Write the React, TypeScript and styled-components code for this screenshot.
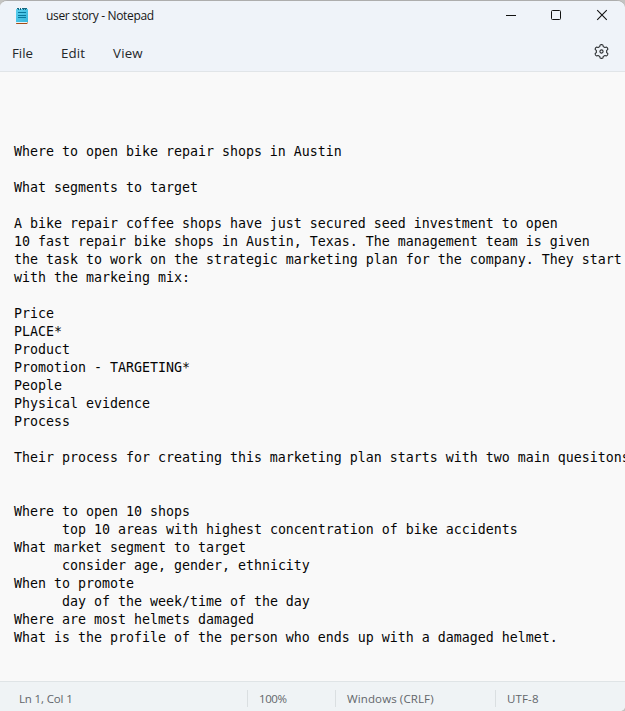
import React from "react";
import styled, { createGlobalStyle } from "styled-components";

const GlobalStyle = createGlobalStyle`
  * { box-sizing: border-box; }
  body { margin: 0; background: #c4c4c2; overflow: hidden; }
`;

const Window = styled.div`
  width: 625px;
  height: 711px;
  display: flex;
  flex-direction: column;
  overflow: hidden;
  border-top: 1px solid #adadad;
  border-radius: 7px 8px 5px 0;
  background: #f9f9f9;
  font-family: "Open Sans", "Noto Sans", sans-serif;
`;

const Header = styled.header`
  flex: none;
  height: 71px;
  background: #eff3f9;
  border-bottom: 1px solid #e1e5e8;
`;

const TitleBar = styled.div`
  display: flex;
  align-items: center;
  height: 30px;
  padding: 0 16px 0 15px;
`;

const Title = styled.h1`
  margin: 0 auto 0 17px;
  font-size: 12px;
  font-weight: 400;
  line-height: 18px;
  letter-spacing: -0.35px;
  color: #161616;
  white-space: nowrap;
`;

const Controls = styled.div`
  display: flex;
  gap: 31px;
  padding-bottom: 2px;
`;

const IconButton = styled.button`
  display: flex;
  padding: 0;
  border: 0;
  background: none;
  color: #111;
`;

const MenuBar = styled.nav`
  display: flex;
  align-items: center;
  height: 44px;
  padding: 0 15px 0 12px;
`;

const MenuItem = styled.span<{ $width: number; $spacing?: number }>`
  width: ${(p) => p.$width}px;
  font-size: 13.3px;
  line-height: 20px;
  letter-spacing: ${(p) => p.$spacing ?? 0}px;
  color: #24272a;
`;

const Settings = styled(IconButton)`
  margin-left: auto;
  padding-bottom: 3px;
  color: #2c2f32;
`;

const Document = styled.pre`
  flex: 1;
  min-height: 0;
  margin: 0;
  padding: 71px 0 0 14px;
  overflow: hidden;
  font-family: "DejaVu Sans Mono", "Liberation Mono", monospace;
  font-size: 13.29px;
  line-height: 18px;
  tab-size: 6;
  color: #050505;
`;

const StatusBar = styled.footer`
  flex: none;
  display: flex;
  align-items: center;
  height: 30px;
  padding-top: 4px;
  border-top: 1px solid #dfe4e6;
  background: #eff3f5;
`;

const StatusCell = styled.div<{ $width?: number; $first?: boolean; $spacing?: number }>`
  flex: ${(p) => (p.$width ? `0 0 ${p.$width}px` : 1)};
  height: 17px;
  padding-left: ${(p) => (p.$first ? 19 : 11)}px;
  border-left: ${(p) => (p.$first ? "0" : "1px solid #dadfe1")};
  font-size: 11.5px;
  line-height: 18px;
  letter-spacing: ${(p) => p.$spacing ?? 0}px;
  color: #62666a;
  white-space: nowrap;
`;

const text = `Where to open bike repair shops in Austin

What segments to target

A bike repair coffee shops have just secured seed investment to open
10 fast repair bike shops in Austin, Texas. The management team is given
the task to work on the strategic marketing plan for the company. They start
with the markeing mix:

Price
PLACE*
Product
Promotion - TARGETING*
People
Physical evidence
Process

Their process for creating this marketing plan starts with two main quesitons


Where to open 10 shops
\ttop 10 areas with highest concentration of bike accidents
What market segment to target
\tconsider age, gender, ethnicity
When to promote
\tday of the week/time of the day
Where are most helmets damaged
What is the profile of the person who ends up with a damaged helmet.`;

function NotepadIcon() {
  return (
    <svg width="14" height="18" viewBox="0 0 14 18">
      <defs>
        <linearGradient id="paper" x1="0" y1="0" x2="1" y2="1">
          <stop offset="0" stopColor="#5bcfee" />
          <stop offset="1" stopColor="#35b5dc" />
        </linearGradient>
      </defs>
      <rect x="1" y="2" width="12" height="13.5" rx="0.6" fill="url(#paper)" />
      <path d="M1 15h11v1H1Z" fill="#e4f2f6" />
      <path d="M12 15h1v1h-1Z" fill="#d8a67e" />
      <path d="M1 16h11.5v.3q0 .7-.7.7H1.7q-.7 0-.7-.7Z" fill="#a34b16" />
      <path d="M3 5.5h8M3 8.5h8M3 10.5h8" stroke="#09789d" />
      <path d="M2 1.5h2M5 1.5h1M7 1.5h1M9 1.5h1M11 1.5h1M3.5 1v2M5.5 1v2M8.5 1v2M10.5 1v2" stroke="#176780" />
    </svg>
  );
}

function GearIcon() {
  const points: string[] = [];
  const count = 96;
  for (let i = 0; i < count; i++) {
    const angle = (i / count) * Math.PI * 2;
    const radius = 6 + 0.85 * Math.tanh(3 * Math.cos(6 * angle));
    points.push(`${(7.5 + radius * Math.sin(angle)).toFixed(2)} ${(7.5 - radius * Math.cos(angle)).toFixed(2)}`);
  }
  return (
    <svg width="16" height="15" viewBox="0 0 16 15" fill="none" stroke="currentColor" strokeWidth="1.1" strokeLinejoin="round">
      <path d={`M${points.join("L")}Z`} />
      <circle cx="7.5" cy="7.5" r="1.6" />
    </svg>
  );
}

export default function App() {
  return (
    <>
      <GlobalStyle />
      <Window>
        <Header>
          <TitleBar>
            <NotepadIcon />
            <Title>user story - Notepad</Title>
            <Controls>
              <IconButton aria-label="Minimize">
                <svg width="14" height="12" viewBox="0 0 14 12"><path d="M1 6.5h10" stroke="currentColor" /></svg>
              </IconButton>
              <IconButton aria-label="Maximize">
                <svg width="14" height="12" viewBox="0 0 14 12"><rect x="1.5" y="1.5" width="9" height="9" rx="1" fill="none" stroke="currentColor" /></svg>
              </IconButton>
              <IconButton aria-label="Close">
                <svg width="14" height="12" viewBox="0 0 14 12"><path d="m2.2 1.2 9.6 9.6m0-9.6-9.6 9.6" stroke="currentColor" strokeWidth="1.1" /></svg>
              </IconButton>
            </Controls>
          </TitleBar>
          <MenuBar>
            <MenuItem $width={49}>File</MenuItem>
            <MenuItem $width={52} $spacing={0.1}>Edit</MenuItem>
            <MenuItem $width={50} $spacing={0.2}>View</MenuItem>
            <Settings aria-label="Settings"><GearIcon /></Settings>
          </MenuBar>
        </Header>
        <Document>{text}</Document>
        <StatusBar>
          <StatusCell $width={247} $first $spacing={-0.15}>Ln 1, Col 1</StatusCell>
          <StatusCell $width={88} $spacing={-0.4}>100%</StatusCell>
          <StatusCell $width={160} $spacing={0.12}>Windows (CRLF)</StatusCell>
          <StatusCell $spacing={0.15}>UTF-8</StatusCell>
        </StatusBar>
      </Window>
    </>
  );
}
